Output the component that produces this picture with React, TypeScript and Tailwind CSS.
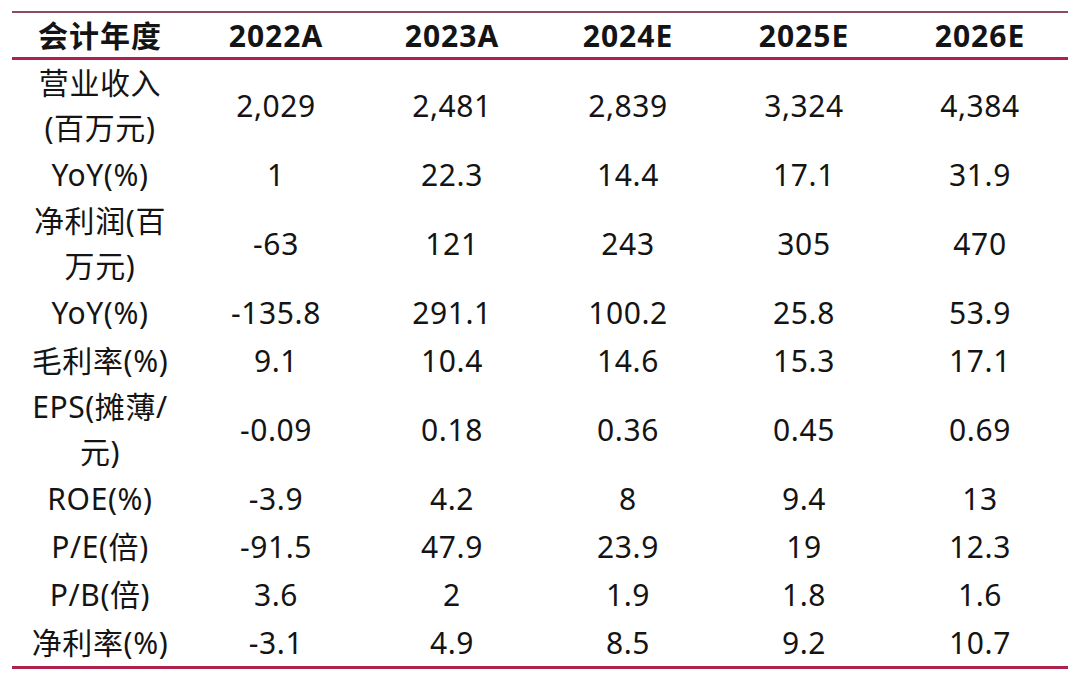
import React from 'react';

type Row = { label: React.ReactNode; values: string[]; tall?: boolean };

const years = ['2022A', '2023A', '2024E', '2025E', '2026E'];

const rows: Row[] = [
  { label: <>营业收入<br />(百万元)</>, values: ['2,029', '2,481', '2,839', '3,324', '4,384'], tall: true },
  { label: 'YoY(%)', values: ['1', '22.3', '14.4', '17.1', '31.9'] },
  { label: <>净利润(百<br />万元)</>, values: ['-63', '121', '243', '305', '470'], tall: true },
  { label: 'YoY(%)', values: ['-135.8', '291.1', '100.2', '25.8', '53.9'] },
  { label: '毛利率(%)', values: ['9.1', '10.4', '14.6', '15.3', '17.1'] },
  { label: <>EPS(摊薄/<br />元)</>, values: ['-0.09', '0.18', '0.36', '0.45', '0.69'], tall: true },
  { label: 'ROE(%)', values: ['-3.9', '4.2', '8', '9.4', '13'] },
  { label: 'P/E(倍)', values: ['-91.5', '47.9', '23.9', '19', '12.3'] },
  { label: 'P/B(倍)', values: ['3.6', '2', '1.9', '1.8', '1.6'] },
  { label: '净利率(%)', values: ['-3.1', '4.9', '8.5', '9.2', '10.7'] },
];

export default function App() {
  return (
    <div
      className="w-[1080px] h-[681px] bg-white pt-[11px] px-[12px] text-[#141414]"
      style={{ fontFamily: '"Noto Sans", "Noto Sans CJK SC", sans-serif' }}
    >
      <div className="w-[1056px] border-t-2 border-[#8e4a61]">
        {/* Header */}
        <div className="grid grid-cols-6 h-[47px] items-center border-b-[3px] border-[#b0224e] text-[30px] font-bold tracking-[1px]">
          <div className="text-center">会计年度</div>
          {years.map((y) => (
            <div key={y} className="text-center">{y}</div>
          ))}
        </div>

        {/* Body */}
        <div className="border-b-[3px] border-[#b0224e] text-[30px] leading-[45px] tracking-[0.6px]">
          {rows.map((r, i) => (
            <div
              key={i}
              className={`grid grid-cols-6 items-center ${r.tall ? 'h-[90px]' : 'h-[48px]'}`}
            >
              <div className="text-center">{r.label}</div>
              {r.values.map((v, j) => (
                <div key={j} className="text-center">{v}</div>
              ))}
            </div>
          ))}
        </div>
      </div>
    </div>
  );
}
